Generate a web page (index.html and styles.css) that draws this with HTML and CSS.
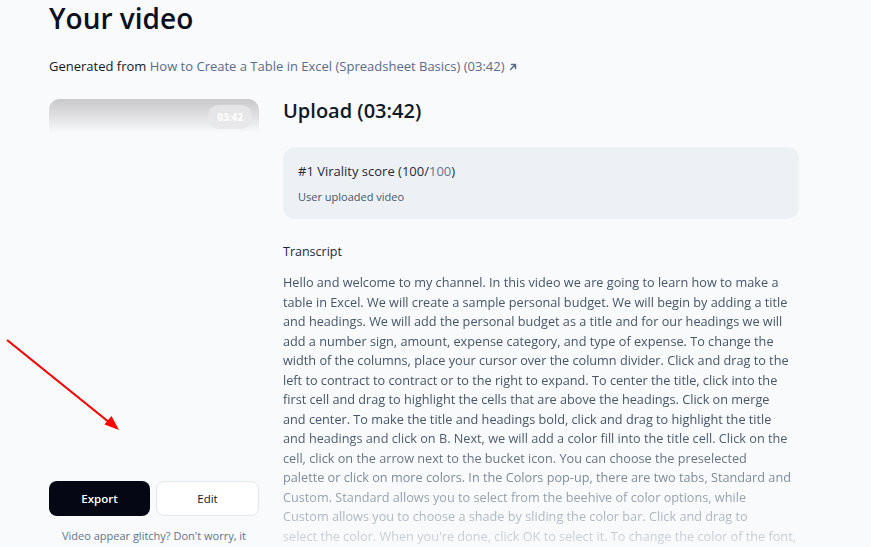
FILE: index.html
```html
<!DOCTYPE html>
<html lang="en">
<head>
  <meta charset="UTF-8" />
  <meta name="viewport" content="width=device-width, initial-scale=1.0"/>
  <title>Your video</title>
  <link rel="stylesheet" href="styles.css">
</head>
<body>
  <div class="page">
    <h1>Your video</h1>

    <p class="source">
      Generated from
      <a href="#">How to Create a Table in Excel (Spreadsheet Basics) (03:42)
        <svg class="ext" width="10" height="10" viewBox="0 0 10 10"><path d="M2.5 7.5 L7.5 2.5 M3.5 2.5 H7.5 V6.5" fill="none" stroke="currentColor" stroke-width="1.5" stroke-linecap="round" stroke-linejoin="round"/></svg>
      </a>
    </p>

    <div class="layout">
      <div class="side">
        <div class="video">
          <div class="thumb">
            <span class="duration">03:42</span>
          </div>
        </div>

        <div class="actions">
          <button class="btn btn-dark">Export</button>
          <button class="btn btn-light">Edit</button>
        </div>
        <p class="hint">Video appear glitchy? Don't worry, it</p>
      </div>

      <div class="main">
        <h2>Upload (03:42)</h2>

        <div class="score-card">
          <div class="score">#1 Virality score (100/<span class="muted">100</span>)</div>
          <div class="score-sub">User uploaded video</div>
        </div>

        <h3>Transcript</h3>
        <div class="transcript">
          Hello and welcome to my channel. In this video we are going to learn how to make a<br>
          table in Excel. We will create a sample personal budget. We will begin by adding a title<br>
          and headings. We will add the personal budget as a title and for our headings we will<br>
          add a number sign, amount, expense category, and type of expense. To change the<br>
          width of the columns, place your cursor over the column divider. Click and drag to the<br>
          left to contract to contract or to the right to expand. To center the title, click into the<br>
          first cell and drag to highlight the cells that are above the headings. Click on merge<br>
          and center. To make the title and headings bold, click and drag to highlight the title<br>
          and headings and click on B. Next, we will add a color fill into the title cell. Click on the<br>
          cell, click on the arrow next to the bucket icon. You can choose the preselected<br>
          palette or click on more colors. In the Colors pop-up, there are two tabs, Standard and<br>
          Custom. Standard allows you to select from the beehive of color options, while<br>
          Custom allows you to choose a shade by sliding the color bar. Click and drag to<br>
          select the color. When you're done, click OK to select it. To change the color of the font,
        </div>
      </div>
    </div>
  </div>

  <!-- annotation arrow -->
  <svg class="arrow" width="130" height="120" viewBox="0 0 130 120">
    <line x1="7" y1="20" x2="110" y2="103" stroke="#ff0000" stroke-width="2.2"/>
    <polygon points="119,110 104.5,104.5 111.5,96" fill="#ff0000"/>
  </svg>
</body>
</html>
```

FILE: styles.css
```css
body {
  margin: 0;
  font-family: 'Open Sans', 'Noto Sans', sans-serif;
  background: #f8fafc;
  color: #0f172a;
  overflow: hidden;
}

.page {
  padding: 0 49px;
}

h1 {
  margin: 0;
  font-size: 28px;
  line-height: 36px;
  font-weight: 600;
  color: #0b0f1e;
}

.source {
  margin: 20px 0 0;
  font-size: 13px;
  line-height: 20px;
  color: #111827;
}

.source a {
  color: #5b6b8a;
  text-decoration: none;
}

.ext {
  vertical-align: -1px;
}

.layout {
  display: flex;
  gap: 24px;
  margin-top: 23px;
}

.side {
  width: 210px;
  flex-shrink: 0;
}

.video {
  height: 370px;
}

.thumb {
  position: relative;
  height: 34px;
  border-radius: 11px 11px 0 0;
  background: linear-gradient(to bottom, #c9c9cb 0%, #e2e2e4 55%, #f8fafc 100%);
}

.duration {
  position: absolute;
  top: 6px;
  right: 7px;
  padding: 5px 9px;
  border-radius: 11px;
  background: rgba(232, 232, 234, 0.85);
  color: #ffffff;
  font-size: 10px;
  font-weight: 700;
}

.actions {
  display: flex;
  gap: 6px;
  margin-top: 12px;
}

.btn {
  flex: 1;
  height: 35px;
  border-radius: 8px;
  font-family: inherit;
  font-size: 11.5px;
  font-weight: 600;
  cursor: pointer;
}

.btn-dark {
  background: #050714;
  color: #fff;
  border: none;
}

.btn-light {
  background: #fff;
  color: #111827;
  border: 1px solid #e2e8f0;
  font-weight: 500;
}

.hint {
  margin: 12px 0 0;
  text-align: center;
  font-size: 11px;
  color: #64748b;
}

.main {
  width: 516px;
}

h2 {
  margin: 0;
  font-size: 20px;
  line-height: 24px;
  font-weight: 600;
  color: #111827;
}

.score-card {
  margin-top: 24px;
  padding: 14px 15px 14px;
  background: #edf1f5;
  border-radius: 12px;
}

.score {
  font-size: 13px;
  line-height: 20px;
  color: #1e293b;
}

.score .muted {
  color: #64748b;
}

.score-sub {
  margin-top: 8px;
  font-size: 11px;
  line-height: 16px;
  color: #475569;
}

h3 {
  margin: 23px 0 0;
  font-size: 12.5px;
  line-height: 20px;
  font-weight: 500;
  color: #1e293b;
}

.transcript {
  margin-top: 11px;
  height: 290px;
  overflow: hidden;
  font-size: 12.7px;
  line-height: 19.5px;
  color: #475569;
  white-space: nowrap;
  -webkit-mask-image: linear-gradient(to bottom, #000 55%, rgba(0, 0, 0, 0.08) 100%);
  mask-image: linear-gradient(to bottom, #000 55%, rgba(0, 0, 0, 0.08) 100%);
}

.arrow {
  position: absolute;
  left: 0;
  top: 320px;
}
```
